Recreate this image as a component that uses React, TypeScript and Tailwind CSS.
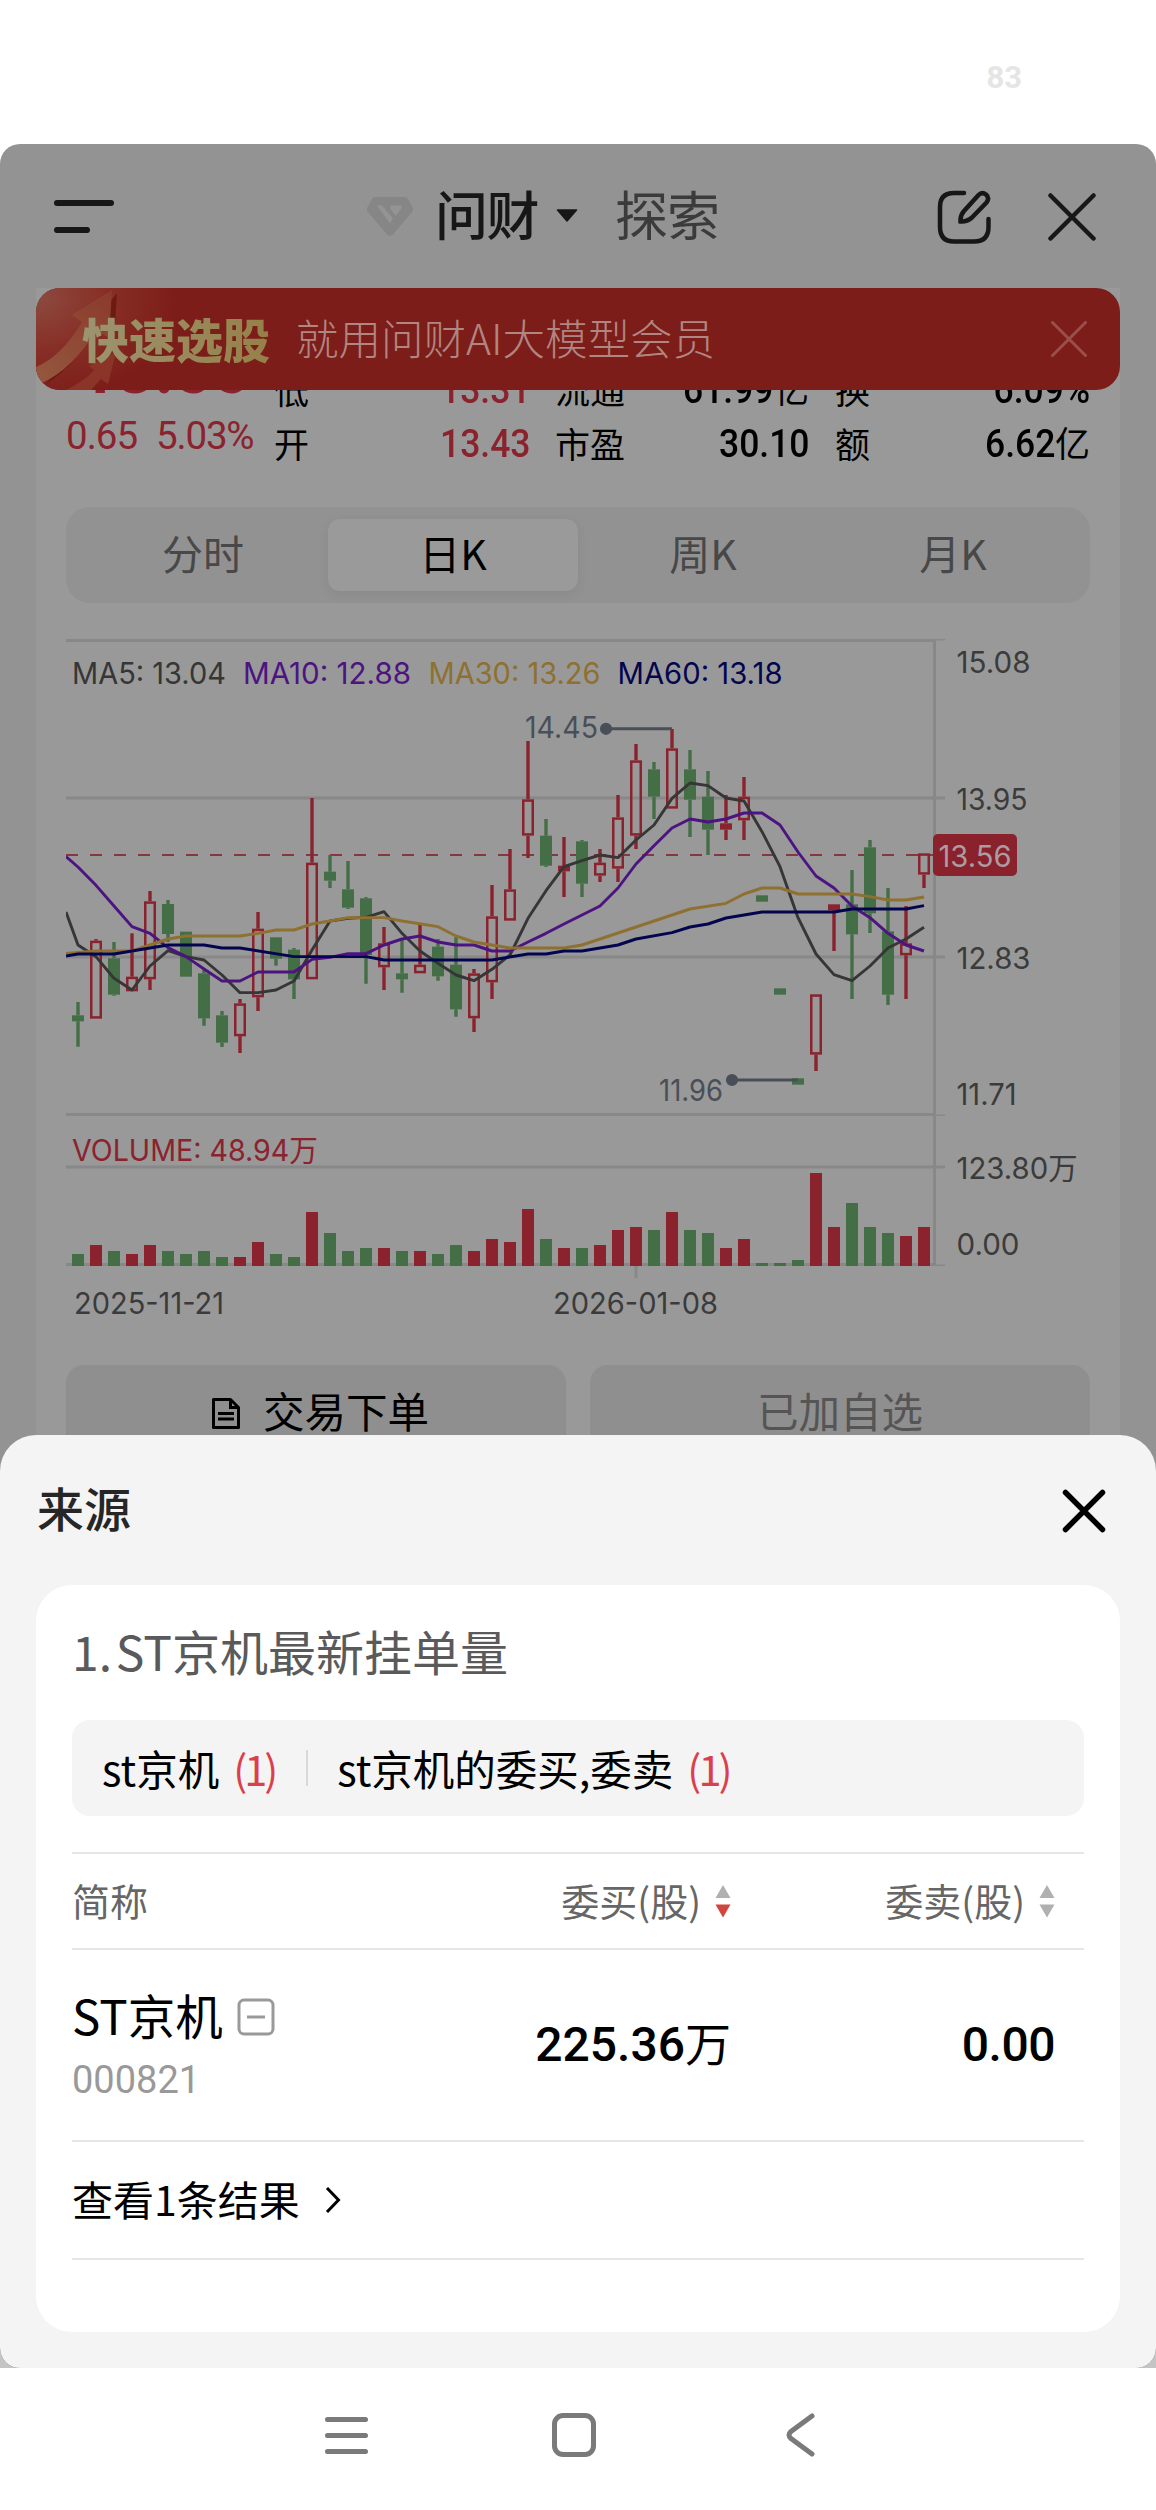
import React from "react";

type Candle = [kind: "r" | "g" | "f", high: number, top: number, bottom: number, low: number, volume: number];

// Values are in thirds of a pixel below the top edge of the price pane; volume is a bar height in pixels.
const candles: Candle[] = [
  ["g", 1146, 1186, 1204, 1280, 12], ["r", 957, 962, 1196, 1196, 21], ["g", 966, 1015, 1124, 1127, 15],
  ["r", 940, 1070, 1114, 1114, 12], ["r", 813, 844, 1078, 1110, 21], ["g", 840, 852, 942, 966, 15],
  ["g", 935, 935, 1070, 1070, 12], ["g", 1050, 1060, 1195, 1217, 15], ["g", 1173, 1186, 1268, 1281, 9],
  ["r", 1137, 1150, 1249, 1299, 9], ["r", 876, 926, 1132, 1173, 24], ["g", 952, 952, 1016, 1037, 12],
  ["g", 984, 989, 1078, 1137, 9], ["r", 534, 728, 1078, 1078, 54], ["g", 705, 755, 782, 804, 33],
  ["g", 723, 808, 863, 867, 15], ["g", 831, 835, 1005, 1091, 18], ["r", 921, 970, 1042, 1110, 18],
  ["g", 960, 1060, 1078, 1118, 15], ["r", 912, 1034, 1060, 1060, 15], ["g", 957, 980, 1069, 1082, 12],
  ["g", 952, 1034, 1168, 1190, 21], ["r", 1047, 1060, 1195, 1236, 15], ["r", 795, 889, 1087, 1137, 27],
  ["r", 687, 808, 902, 902, 24], ["r", 363, 538, 647, 714, 57], ["g", 597, 647, 737, 741, 27],
  ["f", 651, 737, 754, 831, 18], ["g", 660, 664, 791, 831, 18], ["r", 687, 728, 767, 786, 21],
  ["r", 525, 592, 746, 786, 36], ["r", 372, 421, 647, 687, 39], ["g", 426, 448, 530, 597, 36],
  ["r", 327, 385, 566, 566, 54], ["g", 390, 448, 539, 651, 36], ["g", 453, 530, 629, 705, 33],
  ["f", 525, 610, 629, 660, 18], ["r", 471, 530, 601, 660, 27], ["g", 826, 826, 845, 845, 3],
  ["g", 1105, 1105, 1124, 1124, 3], ["g", 1375, 1375, 1394, 1394, 6], ["r", 1123, 1123, 1304, 1353, 93],
  ["f", 853, 853, 871, 993, 39], ["g", 750, 853, 943, 1137, 63], ["g", 660, 682, 880, 939, 39],
  ["g", 804, 934, 1124, 1155, 33], ["r", 858, 970, 1006, 1137, 30], ["r", 700, 700, 764, 804, 39],
];

const ma5 = "66:876 78:975 96:1010 114:1075 132:1110 150:1038 168:992 186:1010 204:1020 222:1065 240:1118 258:1118 276:1110 294:1083 312:990 330:903 348:895 366:892 384:875 402:940 420:993 438:1030 456:1065 474:1082 492:1048 510:1005 528:895 546:812 564:740 582:722 600:705 618:713 636:660 654:615 672:535 690:489 708:497 726:534 744:543 762:635 780:740 798:893 816:1002 834:1064 852:1082 870:1038 888:984 906:957 924:922";
const ma10 = "66:710 78:741 96:796 114:858 132:920 150:940 168:983 186:1010 204:1047 222:1083 240:1083 258:1056 294:1056 312:1018 330:1012 348:1001 366:1001 384:975 402:957 420:948 438:966 456:975 474:975 492:993 510:993 528:966 546:940 564:912 582:885 600:858 618:804 636:732 654:677 672:624 690:597 708:606 726:597 744:579 762:579 780:615 798:696 816:768 834:804 852:858 870:893 888:940 906:975 924:993";
const ma30 = "66:1000 96:993 132:993 150:975 168:957 186:948 240:948 258:940 276:930 294:930 312:912 330:903 348:893 384:893 402:903 438:920 456:948 474:966 492:975 510:984 564:984 582:975 600:957 636:921 690:867 726:850 744:822 762:804 780:804 798:822 852:822 870:830 888:840 906:840 924:831";
const ma60 = "66:1008 78:1002 114:1002 168:975 204:975 222:984 240:984 294:1010 366:1010 384:1020 492:1020 528:1002 546:1002 564:993 582:993 618:975 636:957 672:938 690:921 708:912 726:894 762:876 834:876 852:867 906:867 924:857";

const line = (points: string) =>
  points.split(" ").map((p) => {
    const [x, v] = p.split(":").map(Number);
    return `${x},${620 + v / 3}`;
  }).join(" ");

function Label({ x, y, w, fill = "#3b3b3b", children }: { x: number; y: number; w: number; fill?: string; children: string }) {
  return (
    <text x={x} y={y} textLength={w} lengthAdjust="spacingAndGlyphs" fill={fill} fontSize={29.5}>
      {children}
    </text>
  );
}

function Chart() {
  const red = "#8a232e";
  const green = "#446e46";
  return (
    <svg viewBox="66 630 1024 700" className="h-[700px] w-[1024px] shrink-0 font-[Inter,'Noto_Sans_CJK_SC',sans-serif]">
      <g stroke="#888888" strokeWidth={3} fill="none">
        <path d="M66 640.5H936M66 798H945M66 957H945M66 1114.5H936M66 1167H945M66 1264.5H936M934.5 640V1266M636 1266V1278" />
        <path d="M936 639.8H945M936 1115.3H945M936 1265.3H945" strokeWidth={1.4} />
      </g>
      <path d="M66 855H934" stroke="#85383f" strokeWidth={2} strokeDasharray="12 12" />
      {candles.map(([kind, high, top, bottom, low, volume], i) => {
        const x = 78 + 18 * i;
        const y = (v: number) => 620 + v / 3;
        const color = kind === "g" ? green : red;
        const hollow = kind === "r";
        const inset = hollow ? 1.25 : 0;
        return (
          <g key={i}>
            <path d={`M${x} ${y(high)}V${y(top)}M${x} ${y(bottom)}V${y(low)}`} stroke={color} strokeWidth={3.4} />
            <rect
              x={x - 6 + inset}
              y={y(top) + inset}
              width={12 - 2 * inset}
              height={Math.max(1, (bottom - top) / 3 - 2 * inset)}
              fill={hollow ? "none" : color}
              stroke={hollow ? color : "none"}
              strokeWidth={2.5}
            />
            <rect x={x - 6} y={1266 - volume} width={12} height={volume} fill={color} />
          </g>
        );
      })}
      <g fill="none" strokeWidth={2.9} strokeLinejoin="round">
        <polyline points={line(ma5)} stroke="#363636" />
        <polyline points={line(ma10)} stroke="#4c1480" />
        <polyline points={line(ma30)} stroke="#8e7030" />
        <polyline points={line(ma60)} stroke="#04054f" />
      </g>
      <g stroke="#494f58" fill="#494f58" strokeWidth={3}>
        <path d="M606 728.8H672M732 1080H798" />
        <circle cx={606} cy={728.8} r={4.6} />
        <circle cx={732} cy={1080} r={4.6} />
      </g>
      <Label x={525} y={737.7} w={73} fill="#494f58">14.45</Label>
      <Label x={659} y={1101} w={64} fill="#494f58">11.96</Label>
      <Label x={72} y={683.5} w={154} fill="#363636">MA5: 13.04</Label>
      <Label x={243} y={683.5} w={168} fill="#4c1480">MA10: 12.88</Label>
      <Label x={428.5} y={683.5} w={172} fill="#8e7030">MA30: 13.26</Label>
      <Label x={617.5} y={683.5} w={165} fill="#04054f">MA60: 13.18</Label>
      <Label x={956.5} y={672.5} w={74}>15.08</Label>
      <Label x={956.5} y={810} w={71}>13.95</Label>
      <Label x={956.5} y={969} w={74}>12.83</Label>
      <Label x={956.5} y={1104.5} w={60}>11.71</Label>
      <rect x={933} y={834} width={84} height={42} rx={5} fill="#8a222e" />
      <Label x={938.5} y={867} w={73} fill="#ab9d9f">13.56</Label>
      <Label x={72} y={1161} w={246} fill="#8a232e">VOLUME: 48.94万</Label>
      <Label x={956.5} y={1179} w={121}>123.80万</Label>
      <Label x={956.5} y={1254.5} w={63}>0.00</Label>
      <Label x={74} y={1314} w={150}>2025-11-21</Label>
      <Label x={553} y={1314} w={165}>2026-01-08</Label>
    </svg>
  );
}

function Header() {
  return (
    <header className="flex h-36 shrink-0 items-center pl-[54px] pr-[60px] pt-px">
      <div className="mr-[253px] flex w-[60px] flex-col gap-[21px]">
        <i className="h-[6px] w-[60px] rounded-full bg-[#171717]" />
        <i className="h-[6px] w-9 rounded-full bg-[#171717]" />
      </div>
      <svg viewBox="0 0 46 39" className="mr-[22px] h-[39px] w-[46px]">
        <path d="M8 0H38Q40 0 41 2L46 11Q46.500 13 45 15L26 37.500Q23 40 20 37.500L1 15Q-.5 13 0 11L5 2Q6 0 8 0Z" fill="#868686" />
        <path d="M10 8.500H15L26 21.500 23 26.500Z" fill="#949494" />
        <path d="M23 8.500H35L34 12 28.500 19 24 12.500Z" fill="#949494" />
      </svg>
      <span className="pb-[6px] text-[53px] font-medium leading-none tracking-[-1.500px] text-[#171717]">问财</span>
      <svg viewBox="0 0 22 13" className="ml-[18px] mr-[37px] mt-[-2px] h-[13px] w-[22px]">
        <path d="M1.500 1H20.500L11 12Z" fill="#171717" stroke="#171717" strokeWidth={1.500} strokeLinejoin="round" />
      </svg>
      <span className="pb-[6px] text-[53px] leading-none tracking-[-1px] text-[#3b3b3b]">探索</span>
      <span className="flex-1" />
      <svg viewBox="0 0 54 54" className="mr-[57px] h-[54px] w-[54px]" fill="none" stroke="#171717" strokeWidth={4.500} strokeLinecap="round">
        <path d="M27 3H17Q3 3 3 17V37Q3 51.500 17 51.500H37Q51.500 51.500 51.500 37V29" />
        <path d="M23.500 31.500Q23 25.500 27 21L41.500 5Q45 1.500 49 4.500Q53 8 49.500 12.500L35 27.500Q30 32 23.500 31.500Z" />
      </svg>
      <svg viewBox="0 0 48 48" className="h-12 w-12" fill="none" stroke="#171717" strokeWidth={4.500} strokeLinecap="round">
        <path d="M2.500 2.500 45.500 45.500M45.500 2.500 2.500 45.500" />
      </svg>
    </header>
  );
}

function Banner() {
  return (
    <div className="absolute left-0 top-0 flex h-[102px] w-full items-center overflow-hidden rounded-[24px] bg-[#7d1d19] pl-[46px] pr-[33px]">
      <svg viewBox="0 0 140 102" className="absolute left-0 top-0 h-[102px] w-[140px]">
        <defs>
          <radialGradient id="glow" cx="0" cy=".1" r="1">
            <stop offset="0" stopColor="#8d4a3f" />
            <stop offset=".5" stopColor="#872f27" />
            <stop offset="1" stopColor="#7d1d19" />
          </radialGradient>
          <linearGradient id="arrow" x1="0" y1="1" x2="1" y2="0">
            <stop offset="0" stopColor="#94583f" />
            <stop offset="1" stopColor="#8b3a2b" />
          </linearGradient>
        </defs>
        <path d="M0 0H140V102H0Z" fill="url(#glow)" />
        <path d="M10 96Q40 78 60 38L78 52 81 5Z" fill="#6d1a14" />
        <path d="M0 79Q26 68 46 34L36 27 76 2 73 50 60 42Q38 80 6 95L0 92Z" fill="url(#arrow)" />
        <path d="M30 102Q50 92 58 82L53 78 80 64 72 96 65 91 55 102Z" fill="#8a3527" />
      </svg>
      <span className="relative bg-gradient-to-r from-[#9c9470] to-[#968048] bg-clip-text pb-[3px] text-[47px] font-black leading-[60px] text-transparent">快速选股</span>
      <span className="relative ml-[26px] pb-[4px] text-[42.500px] font-light leading-none text-[#b08683]">就用问财AI大模型会员</span>
      <span className="flex-1" />
      <svg viewBox="0 0 36 36" className="h-9 w-9" stroke="#9a4f4b" strokeWidth={3} strokeLinecap="round">
        <path d="M1.500 1.500 34.500 34.500M34.500 1.500 1.500 34.500" />
      </svg>
    </div>
  );
}

function Stat({ name, value, unit = "", red, className }: { name: string; value: string; unit?: string; red?: boolean; className: string }) {
  return (
    <div className={`flex items-center justify-between text-black ${className}`}>
      <span className="text-[35px]">{name}</span>
      <span className={red ? "text-[#8a232e]" : ""}>
        <span className="inline-block origin-right scale-x-[0.91] font-[Roboto] text-[39px] font-medium">{value}</span>
        <span className="text-[35px]">{unit}</span>
      </span>
    </div>
  );
}

function Quote() {
  return (
    <section className="mt-[44px] flex h-[132px] shrink-0 text-[35px] leading-[54px]">
      <div className="flex w-[208px] flex-col pt-[9px] text-[#8a232e]">
        <span className="h-[60px] whitespace-nowrap pl-[13px] font-[Roboto] text-[66px] font-bold leading-[60px]">13.56</span>
        <span className="mt-[8px] flex gap-[19px] whitespace-nowrap font-[Roboto] text-[38.500px] leading-[54px]">
          <b className="font-normal tracking-[-1px]">0.65</b>
          <b className="font-normal tracking-[-1.200px]">5.03%</b>
        </span>
      </div>
      <div className="mt-[30px] flex flex-1 flex-col">
        <div className="flex h-[54px] items-center">
          <Stat name="低" value="13.31" red className="mr-[25px] w-[256px]" />
          <Stat name="流通" value="61.99" unit="亿" className="mr-[26px] w-[254px]" />
          <Stat name="换" value="6.09%" className="w-[255px]" />
        </div>
        <div className="flex h-[54px] items-center">
          <Stat name="开" value="13.43" red className="mr-[25px] w-[256px]" />
          <Stat name="市盈" value="30.10" className="mr-[26px] w-[254px]" />
          <Stat name="额" value="6.62" unit="亿" className="w-[255px]" />
        </div>
      </div>
    </section>
  );
}

function Tabs() {
  return (
    <nav className="mt-[43px] grid h-24 shrink-0 grid-cols-4 rounded-[24px] bg-[#929292] p-3 text-[41px] text-[#484848]">
      <span className="flex items-center justify-center pb-1">分时</span>
      <span className="flex items-center justify-center rounded-xl bg-[#9a9a9a] pb-1 text-black shadow-[0_4px_12px_rgba(0,0,0,0.06)]">日K</span>
      <span className="flex items-center justify-center pb-1">周K</span>
      <span className="flex items-center justify-center pb-1">月K</span>
    </nav>
  );
}

function Actions() {
  return (
    <div className="mt-[35px] grid h-24 shrink-0 grid-cols-2 gap-6 text-[41.500px]">
      <div className="flex items-center justify-center gap-[23px] rounded-[18px] bg-[#8f8f8f] pl-[9px] text-black">
        <svg viewBox="0 0 28 31" className="h-[31px] w-7" fill="none" stroke="#000" strokeWidth={3}>
          <path d="M1.500 1.500H18.500L26.500 9.500V29.500H1.500Z" strokeLinejoin="round" />
          <path d="M18.500 1.500V9.500H26.500M6 15.500H22M6 21H22" />
        </svg>
        <span className="pb-[5px]">交易下单</span>
      </div>
      <div className="flex items-center justify-center rounded-[18px] bg-[#8f8f8f] pb-[5px] text-[#555555]">已加自选</div>
    </div>
  );
}

function Sort({ active }: { active?: boolean }) {
  return (
    <svg viewBox="0 0 16 34" className="ml-[14px] mt-[3px] h-[34px] w-4">
      <path d="M8 1 15.500 14H.5Z" fill="#b0b0b0" />
      <path d="M.5 20.500H15.500L8 33.500Z" fill={active ? "#d2453c" : "#b0b0b0"} />
    </svg>
  );
}

function Sheet() {
  return (
    <section className="absolute bottom-0 left-0 flex h-[933px] w-full flex-col rounded-b-[20px] rounded-t-[36px] bg-[#f4f4f4] px-9 pb-9">
      <div className="flex h-[150px] shrink-0 items-center justify-between pr-[14px]">
        <h2 className="pb-[5px] pl-px text-[47px] font-medium text-[#262626]">来源</h2>
        <svg viewBox="0 0 44 44" className="mt-[2px] h-11 w-11" stroke="#000" strokeWidth={5.500} strokeLinecap="round">
          <path d="M3.500 3.500 40.500 40.500M40.500 3.500 3.500 40.500" />
        </svg>
      </div>
      <div className="flex flex-1 flex-col rounded-[36px] bg-white px-9">
        <h3 className="flex h-[135px] shrink-0 items-center pb-[5px] text-[48px] text-[#5a5a5a]">
          <span className="whitespace-pre [word-spacing:-7px]">1. ST京机最新挂单量</span>
        </h3>
        <div className="flex h-24 shrink-0 items-center rounded-[18px] bg-[#f4f4f4] pl-[30px] text-[41.500px] text-black">
          <span>st京机</span>
          <span className="ml-[14px] w-[43px] tracking-[-3px] text-[#dc3f4c]">(1)</span>
          <i className="ml-[30px] mr-[29px] h-9 w-[2px] bg-[#d9d9d9]" />
          <span>st京机的委买,委卖</span>
          <span className="ml-[14px] tracking-[-3px] text-[#dc3f4c]">(1)</span>
        </div>
        <div className="mt-[36px] flex h-[98px] shrink-0 items-center border-y-2 border-[#e6e6e6] pb-[4px] pr-[29px] text-[38px] text-[#666666]">
          <span className="w-[360px]">简称</span>
          <span className="flex w-[299px] items-center justify-end">委买(股)<Sort active /></span>
          <span className="flex flex-1 items-center justify-end">委卖(股)<Sort /></span>
        </div>
        <div className="flex h-[192px] shrink-0 items-center border-b-2 border-[#e6e6e6] pr-[29px] text-[46px] text-black">
          <div className="flex w-[360px] flex-col">
            <span className="flex items-center gap-[14px] leading-[64px]">
              <span className="pb-[3px] text-[47.500px]">ST京机</span>
              <svg viewBox="0 0 38 38" className="h-[38px] w-[38px]" fill="none" stroke="#999" strokeWidth={3}>
                <rect x={2} y={2} width={34} height={34} rx={5} />
                <path d="M10 19H28" />
              </svg>
            </span>
            <span className="mt-[3px] font-[Roboto] text-[38px] leading-[54px] text-[#999999]">000821</span>
          </div>
          <span className="w-[299px] pb-[2px] text-right"><b className="font-[Roboto] text-[48px] font-medium">225.36</b>万</span>
          <span className="flex-1 text-right font-[Roboto] text-[48px] font-medium tracking-[-0.500px]">0.00</span>
        </div>
        <div className="flex h-[118px] shrink-0 items-center border-b-2 border-[#e6e6e6] text-[41px] text-black">
          <span className="pb-[3px]">查看1条结果</span>
          <svg viewBox="0 0 16 28" className="ml-[25px] h-7 w-4" fill="none" stroke="#000" strokeWidth={3}>
            <path d="M2 2 13.500 14 2 26" />
          </svg>
        </div>
      </div>
    </section>
  );
}

export default function App() {
  return (
    <div className="flex h-[2510px] w-[1156px] flex-col overflow-hidden bg-white font-['Noto_Sans_CJK_SC',sans-serif]">
      <div className="flex h-36 shrink-0 justify-end pr-[134px] pt-[57px] text-[31px] font-bold leading-[42px] text-[#e5e5e5]">
        <span className="font-[Roboto]">83</span>
      </div>
      <div className="h-[2224px] shrink-0 bg-gradient-to-b from-white from-50% to-[#c4c4c4] to-50%">
        <main className="relative flex h-full flex-col overflow-hidden rounded-[20px] bg-[#939393]">
          <Header />
          <div className="relative mx-9 flex flex-1 flex-col bg-[#999999] px-[30px]">
            <Quote />
            <Tabs />
            <div className="mt-[27px] flex shrink-0">
              <Chart />
            </div>
            <Actions />
            <Banner />
          </div>
          <Sheet />
        </main>
      </div>
      <footer className="flex flex-1 items-center pb-[8px] pl-[325px] text-[#7a7a7a]">
        <div className="mr-[184px] flex w-[43px] flex-col gap-[11px]">
          <i className="h-[5px] rounded-full bg-[#7a7a7a]" />
          <i className="h-[5px] rounded-full bg-[#7a7a7a]" />
          <i className="h-[5px] rounded-full bg-[#7a7a7a]" />
        </div>
        <i className="mr-[190px] h-11 w-11 rounded-[11px] border-[5px] border-[#7a7a7a]" />
        <svg viewBox="0 0 29 44" className="h-11 w-[29px]" fill="none" stroke="#7a7a7a" strokeWidth={5} strokeLinecap="round">
          <path d="M26 3 5 18.500Q1 22 5 25.500L26 41" />
        </svg>
      </footer>
    </div>
  );
}
